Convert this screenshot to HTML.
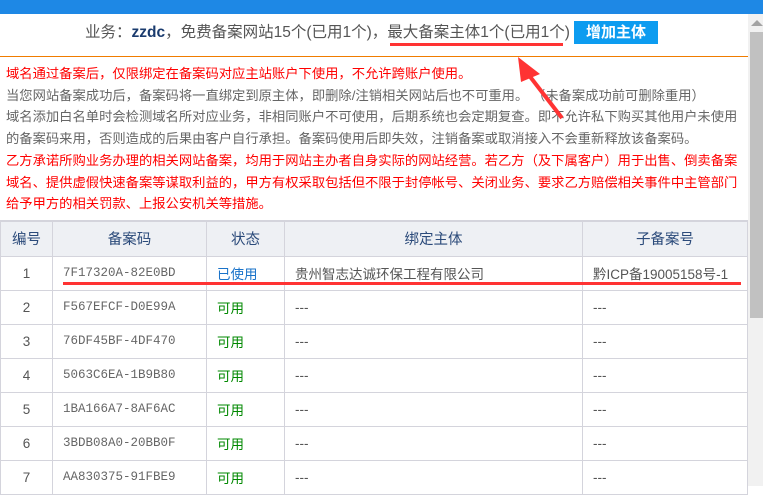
<!DOCTYPE html>
<html><head><meta charset="utf-8"><style>
*{margin:0;padding:0;box-sizing:border-box}
body{width:763px;height:486px;overflow:hidden;background:#fff;font-family:"Liberation Sans","Noto Sans CJK SC",sans-serif;position:relative}
.top{position:absolute;left:0;top:0;width:763px;height:14px;background:#1e88e5}
.sb{position:absolute;left:748px;top:14px;width:15px;height:472px;background:#f1f1f1}
.thumb{position:absolute;left:750px;top:32px;width:13px;height:286px;background:#c1c1c1}
.arr{position:absolute;left:751px;top:20px;width:0;height:0;border-left:6px solid transparent;border-right:6px solid transparent;border-bottom:6px solid #a3a3a3}
.hdr{position:absolute;left:85px;top:22px;font-size:15.5px;color:#555;line-height:22px;white-space:nowrap}
.hdr b{color:#1a3b6e}
.btn{position:absolute;left:574px;top:21px;width:84px;height:23px;background:#0d9cf0;color:#fff;font-size:15px;font-weight:bold;text-align:center;line-height:23px}
.ul{position:absolute;left:390px;top:43px;width:173px;height:3px;background:#f33}
.orange{position:absolute;left:0;top:56px;width:748px;height:1px;background:#f07c00}
.txt{position:absolute;left:6px;top:63px;width:734px;font-size:13.3px;line-height:21.7px;color:#666}
.red{color:#f00}
table{position:absolute;left:0;top:220px;width:748px;border-collapse:collapse;font-size:13.5px}
th{background:#eef0f4;color:#2b4a7a;font-weight:normal;height:35px;font-size:14.5px;border:1px solid #d4d4dc;border-top:2px solid #d4d4dc}
td{height:34px;border:1px solid #d4d4dc;color:#555;padding-left:10px}
td.n{text-align:center;padding:0}
td.c{font-family:"Liberation Mono","DejaVu Sans Mono",monospace;color:#666;font-size:12.5px}
td.g{color:#080}
td.b{color:#1a73c9}
</style></head><body>
<div class="top"></div>
<div class="hdr">业务：<b>zzdc</b>，免费备案网站15个(已用1个)，最大备案主体1个(已用1个)</div>
<div class="btn">增加主体</div>
<div class="ul"></div>
<div class="orange"></div>
<div class="txt"><span class="red">域名通过备案后，仅限绑定在备案码对应主站账户下使用，不允许跨账户使用。</span><br>当您网站备案成功后，备案码将一直绑定到原主体，即删除/注销相关网站后也不可重用。 （未备案成功前可删除重用）<br>域名添加白名单时会检测域名所对应业务，非相同账户不可使用，后期系统也会定期复查。即不允许私下购买其他用户未使用<br>的备案码来用，否则造成的后果由客户自行承担。备案码使用后即失效，注销备案或取消接入不会重新释放该备案码。<br><span class="red">乙方承诺所购业务办理的相关网站备案，均用于网站主办者自身实际的网站经营。若乙方（及下属客户）用于出售、倒卖备案<br>域名、提供虚假快速备案等谋取利益的，甲方有权采取包括但不限于封停帐号、关闭业务、要求乙方赔偿相关事件中主管部门<br>给予甲方的相关罚款、上报公安机关等措施。</span></div>
<table>
<tr><th style="width:52px">编号</th><th style="width:154px">备案码</th><th style="width:78px">状态</th><th style="width:298px">绑定主体</th><th>子备案号</th></tr>
<tr><td class="n">1</td><td class="c">7F17320A-82E0BD</td><td class="b">已使用</td><td>贵州智志达诚环保工程有限公司</td><td>黔ICP备19005158号-1</td></tr>
<tr><td class="n">2</td><td class="c">F567EFCF-D0E99A</td><td class="g">可用</td><td>---</td><td>---</td></tr>
<tr><td class="n">3</td><td class="c">76DF45BF-4DF470</td><td class="g">可用</td><td>---</td><td>---</td></tr>
<tr><td class="n">4</td><td class="c">5063C6EA-1B9B80</td><td class="g">可用</td><td>---</td><td>---</td></tr>
<tr><td class="n">5</td><td class="c">1BA166A7-8AF6AC</td><td class="g">可用</td><td>---</td><td>---</td></tr>
<tr><td class="n">6</td><td class="c">3BDB08A0-20BB0F</td><td class="g">可用</td><td>---</td><td>---</td></tr>
<tr><td class="n">7</td><td class="c">AA830375-91FBE9</td><td class="g">可用</td><td>---</td><td>---</td></tr>
</table>
<div style="position:absolute;left:63px;top:282px;width:678px;height:3px;background:#f33"></div>
<svg style="position:absolute;left:0;top:0" width="763" height="486">
<line x1="528" y1="74" x2="562" y2="118" stroke="#f33" stroke-width="4"/>
<polygon points="518,57 540,74 521,82" fill="#f33"/>
</svg>
<div class="sb"></div><div class="thumb"></div><div class="arr"></div>
</body></html>
